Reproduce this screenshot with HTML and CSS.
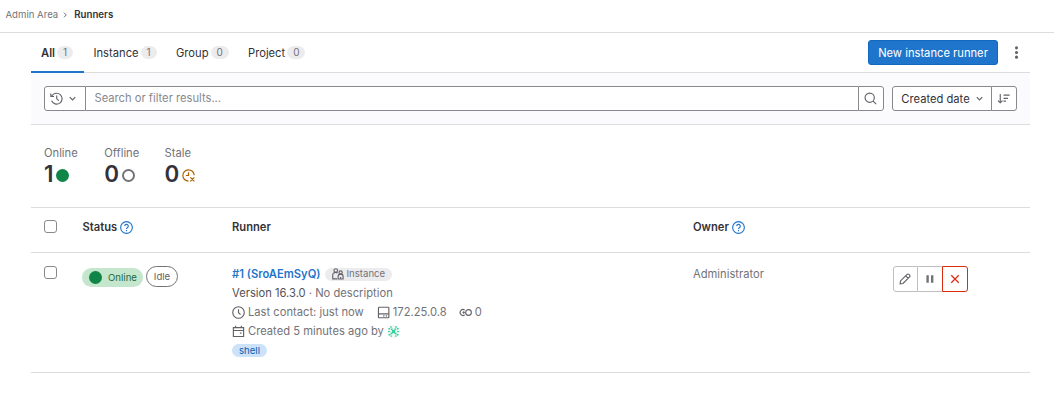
FILE: index.html
```html
<!DOCTYPE html>
<html lang="en">
<head>
<meta charset="utf-8">
<title>Runners</title>
<link rel="stylesheet" href="styles.css">
</head>
<body>
<nav class="breadcrumbs">
  <a class="crumb">Admin Area</a>
  <svg class="crumb-sep" viewBox="0 0 16 16"><path d="M6 3.5 10.5 8 6 12.5"/></svg>
  <a class="crumb current">Runners</a>
</nav>
<main class="content">
  <div class="tabs">
    <a class="tab tab-all active"><span>All</span><span class="count">1</span></a>
    <a class="tab tab-instance"><span>Instance</span><span class="count">1</span></a>
    <a class="tab tab-group"><span>Group</span><span class="count">0</span></a>
    <a class="tab tab-project"><span>Project</span><span class="count">0</span></a>
    <button class="btn-new"><span>New instance runner</span></button>
    <svg class="more" viewBox="0 0 16 16"><circle cx="8" cy="2.3" r="1.9"/><circle cx="8" cy="8" r="1.9"/><circle cx="8" cy="13.7" r="1.9"/></svg>
  </div>
  <div class="filters">
    <div class="search-group">
      <button class="history">
        <svg class="icon" viewBox="0 0 16 16"><path d="M2.3 5A6.7 6.7 0 1 1 2 10.8M1 1.8V5.6h3.9M8.3 4.4V8.4l2.6 2.3"/></svg>
        <svg class="chevron" viewBox="0 0 16 16"><path d="M4 6l4 4 4-4"/></svg>
      </button>
      <div class="search-input"><span>Search or filter results...</span></div>
      <button class="search-btn"><svg class="icon" viewBox="0 0 16 16"><circle cx="7" cy="7" r="5.7"/><path d="M11.2 11.2 15 15"/></svg></button>
    </div>
    <div class="sort-group">
      <button class="sort-by"><span>Created date</span><svg class="chevron" viewBox="0 0 16 16"><path d="M4 6l4 4 4-4"/></svg></button>
      <button class="sort-dir"><svg class="icon" viewBox="0 0 16 16"><path d="M4 2.5v10.8M1.2 10.5 4 13.3l2.8-2.8M8 3.8h7.5M8 7.8h5.5M8 11.3h3"/></svg></button>
    </div>
  </div>
  <section class="stats">
    <div class="stat"><div class="stat-label">Online</div><div class="stat-value">1<svg class="icon green" viewBox="0 0 16 16"><circle cx="8" cy="8" r="8"/></svg></div></div>
    <div class="stat"><div class="stat-label">Offline</div><div class="stat-value">0<svg class="icon ring" viewBox="0 0 16 16"><circle cx="8" cy="8" r="6.8"/></svg></div></div>
    <div class="stat"><div class="stat-label">Stale</div><div class="stat-value">0<svg class="icon stale" viewBox="0 0 16 16"><path d="M8 15A7 7 0 1 1 15 7.6M8 4v4H4.8M10.3 10.3l4.9 4.9M15.2 10.3l-4.9 4.9"/></svg></div></div>
  </section>
  <div class="row head">
    <div class="cell-check"><span class="checkbox"></span></div>
    <div class="cell-status"><span>Status</span><svg class="icon help" viewBox="0 0 16 16"><circle cx="8" cy="8" r="7.2"/><path d="M5.8 6.3a2.2 2.2 0 1 1 3.3 1.9C8.4 8.6 8 8.9 8 9.7M8 11v1.6"/></svg></div>
    <div class="cell-runner">Runner</div>
    <div class="cell-owner"><span>Owner</span><svg class="icon help" viewBox="0 0 16 16"><circle cx="8" cy="8" r="7.2"/><path d="M5.8 6.3a2.2 2.2 0 1 1 3.3 1.9C8.4 8.6 8 8.9 8 9.7M8 11v1.6"/></svg></div>
  </div>
  <div class="row body">
    <div class="cell-check"><span class="checkbox"></span></div>
    <div class="cell-status">
      <span class="badge-online"><svg class="icon green" viewBox="0 0 16 16"><circle cx="8" cy="8" r="8"/></svg><span>Online</span></span>
      <span class="badge-idle">Idle</span>
    </div>
    <div class="cell-runner">
      <div class="line title"><a class="runner-link">#1 (SroAEmSyQ)</a><span class="badge-type"><svg class="icon" viewBox="0 0 16 16"><circle cx="5" cy="3.4" r="2.4"/><path d="M7 14.5H1V9.2C1 7.4 2.6 5.9 5 5.9c1 0 1.8.3 2.4.8"/><circle cx="11.5" cy="6" r="2.2"/><path d="M8.2 14.7v-3.4c0-1.9 1.4-3.1 3.3-3.1s3.3 1.2 3.3 3.1v3.4zM11.5 12v2.5"/></svg><span>Instance</span></span></div>
      <div class="line version"><span class="dark">Version 16.3.0</span> · No description</div>
      <div class="line meta">
        <svg class="icon" viewBox="0 0 16 16"><circle cx="8" cy="8" r="7.1"/><path d="M8 4v4.3l2.5 2.4"/></svg><span class="contact">Last contact: just now</span>
        <svg class="icon" viewBox="0 0 16 16"><rect x="1.8" y="1.5" width="12.8" height="13" rx="1"/><path d="M2 9.7h12.5M7.6 12.2h1.6M10.8 12.2h1.6"/></svg><span class="ip">172.25.0.8</span>
        <svg class="icon jobs" viewBox="0 0 16 16"><circle cx="11.7" cy="8" r="3.5"/><path d="M7 5A3.6 3.6 0 1 0 7 11M4.4 8h2.8M5.8 6.6v2.8"/></svg><span>0</span>
      </div>
      <div class="line created">
        <svg class="icon" viewBox="0 0 16 16"><path d="M1.7 3.2h12.6v11H1.7zM1.7 6.7h12.6M4.5 1v2.2M11.5 1v2.2M9.7 10h2"/></svg><span>Created 5 minutes ago by</span>
        <svg class="avatar" viewBox="0 0 13 13"><circle class="edge" cx="6.5" cy="6.5" r="6"/><path d="M3.2 1.3h1.5v1.4H3.2zM8.3 1.3h1.5v1.4H8.3zM1.4 3h1.8v1.5H1.4zM9.8 3h1.8v1.5H9.8zM4 3.6h1.6v1.6H4zM7.4 3.6H9v1.6H7.4zM5 5h3v3H5zM1 6h2v1H1zM10 6h2v1h-2zM3.5 7.6h2v1.6h-2zM7.5 7.6h2v1.6h-2zM1.5 9h1.8v1.5H1.5zM9.7 9h1.8v1.5H9.7zM3.5 10.4h1.4v1.3H3.5zM8.1 10.4h1.4v1.3H8.1z"/></svg>
      </div>
      <span class="tag">shell</span>
    </div>
    <div class="cell-owner">Administrator</div>
    <div class="actions">
      <button class="edit"><svg class="icon" viewBox="0 0 16 16"><path d="M1.6 14.4 2 10.6 10.8 1.9a1.7 1.7 0 0 1 2.4 0l.9.9a1.7 1.7 0 0 1 0 2.4L5.4 14zM9 3.8 12.2 7"/></svg></button>
      <button class="pause"><svg class="icon" viewBox="0 0 16 16"><path d="M3.2 3h3.2v10H3.2zM9.3 3h3.2v10H9.3z"/></svg></button>
      <button class="delete"><svg class="icon" viewBox="0 0 16 16"><path d="M3 3l10 10M13 3 3 13"/></svg></button>
    </div>
  </div>
</main>
</body>
</html>
```
FILE: styles.css
```css
* { box-sizing: border-box; }
body { margin: 0; background: #fff; color: #737278; font: 11.2px/16px Inter, "Liberation Sans", sans-serif; white-space: nowrap; }
button { margin: 0; padding: 0; background: #fff; border: 1px solid #89888d; color: #333238; font: inherit; display: flex; align-items: center; justify-content: center; }
svg { display: block; flex: none; fill: none; stroke: currentColor; stroke-width: 1.5; }
.icon { width: 13px; height: 13px; }
.chevron { width: 11px; height: 11px; color: #626168; stroke-width: 1.7; }
.breadcrumbs { height: 33px; border-bottom: 1px solid #dcdcde; display: flex; align-items: center; padding: 0 0 3px 5.5px; font-size: 9.6px; }
.crumb-sep { width: 8px; height: 8px; margin: 0 5px 0 3px; stroke-width: 2; }
.current { color: #333238; font-weight: 600; font-size: 9.7px; }
.content { width: 999px; margin-left: 31px; }
.tabs { height: 40px; border-bottom: 1px solid #dcdcde; display: flex; align-items: center; color: #333238; }
.tab { display: flex; align-items: center; height: 40px; padding: 1px 10px 0; gap: 2px; }
.tab-all { width: 53px; }
.tab-instance { width: 82px; padding-left: 9.5px; }
.tab-group { width: 72px; }
.active { font-weight: 600; box-shadow: inset 0 -2px #1f75cb; }
.count { height: 13px; margin-top: -1px; padding: 0 6px; border-radius: 7px; background: #ececef; color: #737278; font-size: 10px; line-height: 13px; font-weight: 400; }
.btn-new { width: 130px; height: 25px; margin-left: auto; color: #fff; background: #1f75cb; border-color: #1068bf; border-radius: 3px; }
.btn-new span { padding-top: 1px; }
.more { width: 13px; height: 13px; margin: 0 7px 0 12px; fill: #626168; stroke: none; }
.filters { height: 52px; padding: 0 13px; border-bottom: 1px solid #dcdcde; background: #fbfafd; display: flex; align-items: center; gap: 8px; }
.search-group { display: flex; flex: 1; color: #737278; }
.search-group .icon, .sort-dir .icon { color: #626168; stroke-width: 1.4; }
.history { width: 42px; height: 25px; border-radius: 3px 0 0 3px; gap: 4px; padding-right: 2px; }
.search-input { flex: 1; height: 25px; border: solid #89888d; border-width: 1px 0; background: #fff; padding-left: 8.5px; line-height: 23px; color: #89888d; }
.search-btn { width: 26px; height: 25px; padding-right: 2px; border-radius: 0 3px 3px 0; }
.sort-group { display: flex; }
.sort-by { width: 100px; height: 25px; gap: 4px; padding-left: 2px; border-radius: 3px 0 0 3px; }
.sort-dir { width: 26px; height: 25px; margin-left: -1px; padding-right: 2px; border-radius: 0 3px 3px 0; }
.stats { height: 83px; padding: 20px 13px 0; border-bottom: 1px solid #dcdcde; display: flex; }
.stat { width: 60.3px; }
.stat-label { height: 16px; }
.stat-value { display: flex; align-items: center; gap: 2.6px; color: #333238; font-size: 22.4px; line-height: 26px; font-weight: 600; }
.stat-value .icon { margin-top: 3px; }
.green { fill: #108548; stroke: none; }
.ring { color: #737278; stroke-width: 2.4; }
.stale { color: #ab6100; }
.row { display: grid; grid-template-columns: 51px 150px 461px 200px 1fr; border-bottom: 1px solid #dcdcde; }
.head { height: 45px; color: #333238; font-weight: 600; padding-top: 11px; }
.body { height: 120px; padding-top: 13px; }
.cell-check { padding: 1px 0 0 13px; }
.body .cell-check { padding-top: 0; }
.checkbox { display: block; width: 13px; height: 13px; border: 1px solid #89888d; border-radius: 3px; background: #fff; }
.cell-status { display: flex; align-items: flex-start; }
.head .cell-status, .head .cell-owner { display: flex; gap: 3px; }
.head .cell-status { padding-left: .5px; }
.help { color: #1f75cb; margin-top: 2px; stroke-width: 1.4; }
.badge-online { display: flex; align-items: center; gap: 6px; width: 61px; height: 19px; margin: 2px 3px 0 0; padding-left: 7px; border-radius: 10px; background: #c3e6cd; color: #24663b; font-size: 9.6px; }
.badge-idle { width: 32px; height: 21px; border: 1px solid #737278; border-radius: 11px; text-align: center; font-size: 9.6px; line-height: 20px; color: #626168; }
.line { display: flex; align-items: center; height: 19px; }
.title { height: 16px; margin-bottom: 1.5px; }
.runner-link { color: #1f75cb; font-weight: 600; }
.badge-type { display: flex; align-items: center; gap: 3px; height: 13px; margin-left: 4px; padding: 0 7px; border-radius: 7px; background: #ececef; font-size: 9.6px; }
.badge-type .icon { width: 12px; height: 12px; color: #626168; }
.version { white-space: pre; }
.dark { color: #535158; }
.meta .icon, .created .icon { margin-right: 3px; color: #626168; stroke-width: 1.4; }
.contact { margin-right: 13px; }
.ip { margin-right: 12px; }
.avatar { width: 13px; height: 13px; margin-left: 3px; fill: #2dd49b; stroke: none; }
.edge { fill: #f4f6f5; stroke: #eee; stroke-width: .5; }
.tag { display: inline-block; height: 13px; margin-top: 3.5px; padding: 0 7px; border-radius: 7px; background: #cbe2f9; color: #0b5cad; font-size: 9.6px; line-height: 13px; vertical-align: top; }
.actions { display: flex; }
.actions button { width: 25px; height: 26px; border-color: #bfbfc3; }
.actions .icon { width: 12px; height: 12px; color: #626168; }
.actions .edit { border-radius: 3px 0 0 3px; padding-right: 1px; }
.actions .pause { border-left: 0; border-right: 0; width: 24px; }
.pause path { fill: #737278; stroke: none; }
.actions .delete { width: 26px; border-color: #dd2b0e; border-radius: 0 3px 3px 0; }
.actions .delete .icon { color: #dd2b0e; stroke-width: 1.7; }
```
